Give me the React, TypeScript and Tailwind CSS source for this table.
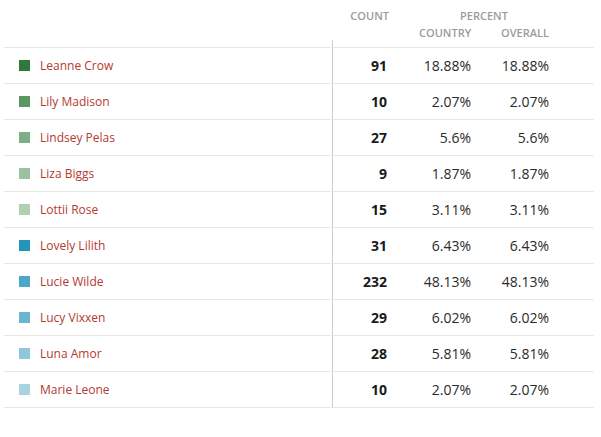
const rows = [
  { name: 'Leanne Crow', color: '#2f7a3a', count: 91, country: '18.88%', overall: '18.88%' },
  { name: 'Lily Madison', color: '#5a9862', count: 10, country: '2.07%', overall: '2.07%' },
  { name: 'Lindsey Pelas', color: '#7eae86', count: 27, country: '5.6%', overall: '5.6%' },
  { name: 'Liza Biggs', color: '#9bc1a1', count: 9, country: '1.87%', overall: '1.87%' },
  { name: 'Lottii Rose', color: '#b0cfb3', count: 15, country: '3.11%', overall: '3.11%' },
  { name: 'Lovely Lilith', color: '#2494bb', count: 31, country: '6.43%', overall: '6.43%' },
  { name: 'Lucie Wilde', color: '#4da8c7', count: 232, country: '48.13%', overall: '48.13%' },
  { name: 'Lucy Vixxen', color: '#6ab6d0', count: 29, country: '6.02%', overall: '6.02%' },
  { name: 'Luna Amor', color: '#8ec7db', count: 28, country: '5.81%', overall: '5.81%' },
  { name: 'Marie Leone', color: '#a8d4e2', count: 10, country: '2.07%', overall: '2.07%' },
];

export default function App() {
  return (
    <div className="w-[601px] h-[437px] bg-white font-['Open_Sans',sans-serif]">
      <div className="ml-[4px] w-[590px]">
        {/* header */}
        <div className="flex h-[47px] text-[11px] font-semibold text-[#9b9b9b] leading-none">
          <div className="w-[329px] flex items-end">
            <div className="h-[7px] w-full border-r border-[#cccccc]" />
          </div>
          <div className="w-[56px] pt-[10px] text-right">COUNT</div>
          <div className="flex-1 pt-[10px] pl-[30px] pr-[45px]">
            <div className="text-center">PERCENT</div>
            <div className="mt-[6px] flex justify-between">
              <span>COUNTRY</span>
              <span>OVERALL</span>
            </div>
          </div>
        </div>

        {/* body */}
        <div className="border-t border-[#e8e8e8]">
          {rows.map((r, key) => (
            <div key={key} className="flex h-9 border-b border-[#e8e8e8] text-[14px]">
              <div className="w-[329px] flex items-center border-r border-[#cccccc] pl-[15px]">
                <span className="w-[11px] h-[11px] mr-[10px]" style={{ backgroundColor: r.color }} />
                <span className="text-[12px] text-[#b33a30]">{r.name}</span>
              </div>
              <div className="w-[54px] flex items-center justify-end font-bold text-[#1a1a1a]">{r.count}</div>
              <div className="w-[84px] flex items-center justify-end text-[#2a2a2a]">{r.country}</div>
              <div className="w-[78px] flex items-center justify-end text-[#2a2a2a]">{r.overall}</div>
            </div>
          ))}
        </div>
      </div>
    </div>
  );
}
